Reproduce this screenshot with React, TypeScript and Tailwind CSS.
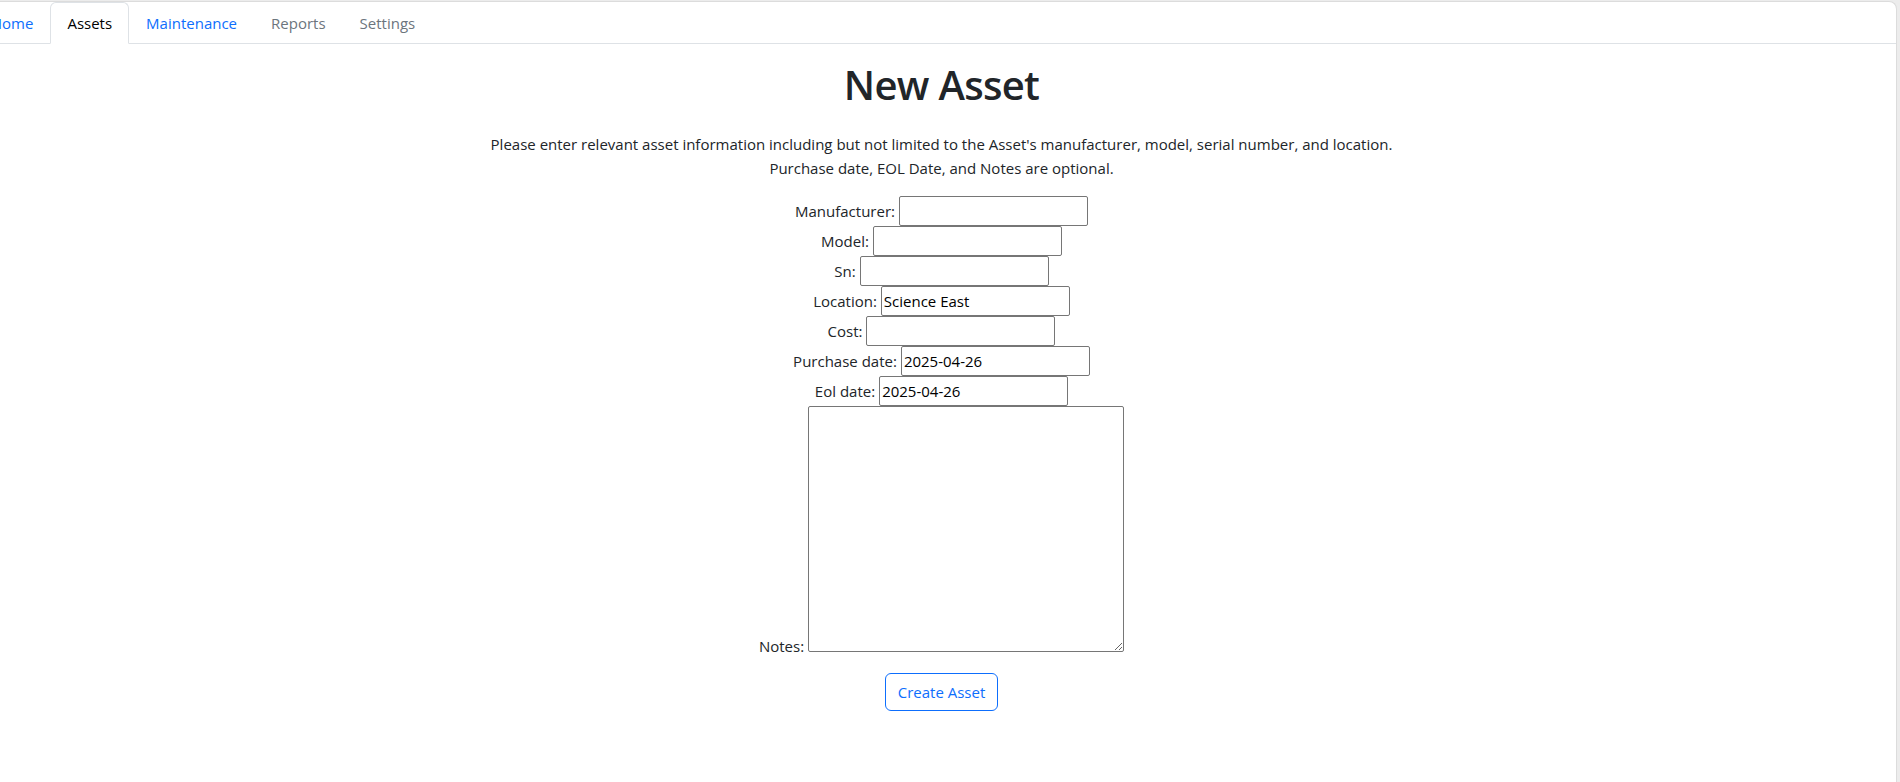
import { useState } from "react";

const tabs = [
  { name: "Home", active: false, color: "text-[#0d6efd]" },
  { name: "Assets", active: true, color: "text-black" },
  { name: "Maintenance", active: false, color: "text-[#0d6efd]" },
  { name: "Reports", active: false, color: "text-[#6c757d]" },
  { name: "Settings", active: false, color: "text-[#6c757d]" },
];

const fields = [
  { label: "Manufacturer:", value: "" },
  { label: "Model:", value: "" },
  { label: "Sn:", value: "" },
  { label: "Location:", value: "Science East" },
  { label: "Cost:", value: "" },
  { label: "Purchase date:", value: "2025-04-26" },
  { label: "Eol date:", value: "2025-04-26" },
];

function Field({ label, value }: { label: string; value: string }) {
  return (
    <div className="flex h-[30px] items-center justify-center gap-[4px]">
      <label className="leading-6">{label}</label>
      <input
        type="text"
        defaultValue={value}
        className="h-[30px] w-[189px] rounded-[2px] border border-[#767676] bg-white px-[2px] text-[15px] leading-[28px] text-black outline-none"
      />
    </div>
  );
}

export default function App() {
  const [notes, setNotes] = useState("");

  return (
    <div className="h-[782px] w-full overflow-hidden bg-[#ececec] font-['Open_Sans','Segoe_UI',sans-serif] text-[15px] leading-6 text-[#212529]">
      <div className="mt-px h-[781px] w-[1897px] overflow-hidden rounded-tr-[8px] border-t border-r border-[#dcdcdc] bg-white">
        <nav className="ml-[-26px] flex border-b border-[#dee2e6]">
          {tabs.map((tab) => (
            <a
              key={tab.name}
              href="#"
              className={
                tab.active
                  ? "-mb-px rounded-t-[6px] border border-[#dee2e6] border-b-white bg-white px-4 py-2 text-black"
                  : `-mb-px rounded-t-[6px] border border-transparent px-4 py-2 ${tab.color}`
              }
            >
              {tab.name}
            </a>
          ))}
        </nav>

        <main className="flex w-[1883px] flex-col items-center pt-[17px]">
          <h1 className="text-[40px] leading-[48px] font-semibold tracking-[-0.7px]">New Asset</h1>
          <p className="mt-[23px] text-center">
            Please enter relevant asset information including but not limited to the Asset's manufacturer, model, serial number, and location.
            <br />
            Purchase date, EOL Date, and Notes are optional.
          </p>

          <form className="mt-[16px] flex flex-col" onSubmit={(e) => e.preventDefault()}>
            {fields.map((f) => (
              <Field key={f.label} label={f.label} value={f.value} />
            ))}
            <div className="flex items-end justify-center gap-[4px]">
              <label className="mb-[-6px] leading-6">Notes:</label>
              <textarea
                value={notes}
                onChange={(e) => setNotes(e.target.value)}
                className="h-[246px] w-[316px] rounded-[2px] border border-[#767676] bg-white px-[2px] text-[15px] outline-none"
              />
            </div>
            <div className="mt-[21px] flex justify-center">
              <button
                type="submit"
                className="h-[38px] rounded-[6px] border border-[#0d6efd] px-3 text-[#0d6efd]"
              >
                Create Asset
              </button>
            </div>
          </form>
        </main>
      </div>
    </div>
  );
}
